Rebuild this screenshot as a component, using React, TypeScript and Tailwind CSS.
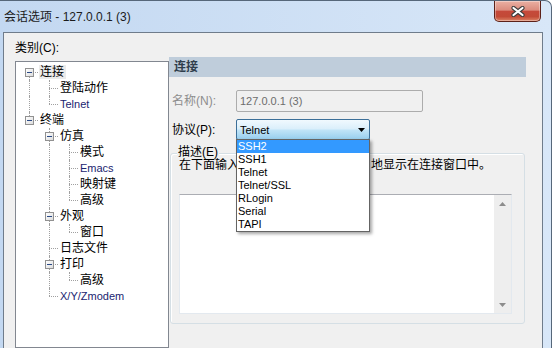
import React from 'react';

type Item = {
  t: string;
  lv: number;
  kids?: boolean;
  next: boolean;
  g: boolean[];
  latin?: boolean;
  sel?: boolean;
  first?: boolean;
};

const items: Item[] = [
  { t: '连接', lv: 0, kids: true, next: true, g: [], sel: true, first: true },
  { t: '登陆动作', lv: 1, next: true, g: [true] },
  { t: 'Telnet', lv: 1, next: false, g: [true], latin: true },
  { t: '终端', lv: 0, kids: true, next: false, g: [] },
  { t: '仿真', lv: 1, kids: true, next: true, g: [false] },
  { t: '模式', lv: 2, next: true, g: [false, true] },
  { t: 'Emacs', lv: 2, next: true, g: [false, true], latin: true },
  { t: '映射键', lv: 2, next: true, g: [false, true] },
  { t: '高级', lv: 2, next: false, g: [false, true] },
  { t: '外观', lv: 1, kids: true, next: true, g: [false] },
  { t: '窗口', lv: 2, next: false, g: [false, true] },
  { t: '日志文件', lv: 1, next: true, g: [false] },
  { t: '打印', lv: 1, kids: true, next: true, g: [false] },
  { t: '高级', lv: 2, next: false, g: [false, true] },
  { t: 'X/Y/Zmodem', lv: 1, next: false, g: [false], latin: true },
];

function TreeRow({ it }: { it: Item }) {
  return (
    <div className="flex h-[16px] items-center pl-[3px]">
      {it.g.map((v, i) => (
        <div key={i} className="relative h-full w-[20px] shrink-0">
          {v && <div className="absolute left-[10px] top-0 bottom-0 border-l border-dotted border-[#a0a0a0]" />}
        </div>
      ))}
      <div className="relative h-full w-[20px] shrink-0">
        {!it.first && <div className="absolute left-[10px] top-0 h-[8px] border-l border-dotted border-[#a0a0a0]" />}
        {it.next && <div className="absolute left-[10px] top-[8px] bottom-0 border-l border-dotted border-[#a0a0a0]" />}
        <div className="absolute left-[10px] right-[1px] top-[8px] border-t border-dotted border-[#a0a0a0]" />
        {it.kids && (
          <div className="absolute left-[6px] top-[4px] h-[9px] w-[9px] border border-[#919191] bg-gradient-to-br from-white to-[#dcdcdc]">
            <div className="absolute left-[1px] top-[3px] h-[1px] w-[5px] bg-[#2a4a86]" />
          </div>
        )}
      </div>
      <span
        className={
          (it.sel ? 'bg-[#ebebeb] ' : '') +
          (it.latin ? 'text-[11px] text-[#1a2470] ' : 'text-[12px] text-black ') +
          'h-[14px] pl-[1px] pr-[2px] leading-[14px] whitespace-nowrap'
        }
      >
        {it.t}
      </span>
    </div>
  );
}

function CloseButton() {
  return (
    <div className="mr-[10px] flex h-[21px] w-[47px] items-center justify-center rounded-b-[5px] border border-t-0 border-[#5c2119] bg-[linear-gradient(to_bottom,#eab0a3_0%,#db8c7e_45%,#c5493a_52%,#c24a36_78%,#dc8466_100%)] shadow-[inset_0_0_0_1px_rgba(255,255,255,0.35)]">
      <svg width="14" height="11" viewBox="0 0 14 11">
        <path d="M2.5 2 L11.5 9 M11.5 2 L2.5 9" stroke="#3d3d3d" strokeWidth="4.2" strokeLinecap="round" />
        <path d="M2.5 2 L11.5 9 M11.5 2 L2.5 9" stroke="#ffffff" strokeWidth="2.2" strokeLinecap="round" />
      </svg>
    </div>
  );
}

const protocols = ['SSH2', 'SSH1', 'Telnet', 'Telnet/SSL', 'RLogin', 'Serial', 'TAPI'];

export default function App() {
  return (
    <div className="h-[348px] w-[552px] overflow-hidden bg-white font-['Liberation_Sans','Noto_Sans_CJK_SC',sans-serif] text-[12px] leading-[16px] text-black">
      <div className="flex h-full w-full flex-col rounded-tr-[7px] border-t border-r border-[#56677a] bg-gradient-to-r from-[#c3d8f1] to-[#d8e7f8]">
        <div className="flex h-[31px] shrink-0 items-start justify-between">
          <div className="pl-[4px] pt-[8px] text-[12px] text-[#1b1b1b] whitespace-nowrap">会话选项 - 127.0.0.1 (3)</div>
          <CloseButton />
        </div>
        <div className="ml-[3px] mr-[8px] flex flex-1 border border-b-0 border-[#6f7c8b] bg-[#f0f0f0]">
          {/* left column */}
          <div className="flex w-[165px] shrink-0 flex-col pl-[11px] pt-[7px]">
            <div className="h-[16px] whitespace-nowrap">类别(C):</div>
            <div className="mt-[5px] flex-1 border border-[#828790] bg-white pt-[2px]">
              {items.map((it, i) => (
                <TreeRow key={i} it={it} />
              ))}
            </div>
          </div>
          {/* right column */}
          <div className="flex flex-1 flex-col pt-[24px]">
            <div className="flex h-[20px] w-[357px] items-center bg-[#bfcddb] pl-[5px] font-bold text-[#2f3d4c]">连接</div>

            <div className="mt-[13px] flex h-[22px] items-center">
              <div className="w-[67px] pl-[3px] text-[#8d8d8d] whitespace-nowrap">名称(N):</div>
              <div className="flex h-[22px] w-[187px] items-center rounded-[2px] border border-[#acacac] bg-[#f0f0f0] pl-[3px] text-[11px] text-[#6d6d6d]">
                127.0.0.1 (3)
              </div>
            </div>

            <div className="relative z-20 mt-[7px] flex h-[21px] items-center">
              <div className="w-[67px] pl-[3px] whitespace-nowrap">协议(P):</div>
              <div className="relative h-[21px] w-[134px]">
                <div className="flex h-full w-full items-center justify-between rounded-[2px] border border-[#3c6f98] bg-[linear-gradient(to_bottom,#f1f9fe_0%,#dbeffb_45%,#bfe3f7_55%,#98cfee_100%)] pl-[3px] pr-[4px] text-[11px]">
                  <span>Telnet</span>
                  <svg width="7" height="4" viewBox="0 0 7 4">
                    <path d="M0 0 H7 L3.5 4 Z" fill="#000" />
                  </svg>
                </div>
                <div className="absolute left-0 top-[20px] w-[134px] border border-[#646464] bg-white shadow-[2px_2px_3px_rgba(0,0,0,0.35)]">
                  {protocols.map((p, i) => (
                    <div
                      key={p}
                      className={
                        (i === 0 ? 'bg-[#3399ff] text-white ' : 'text-black ') +
                        'h-[13px] pl-[1px] text-[11px] leading-[13px] whitespace-nowrap'
                      }
                    >
                      {p}
                    </div>
                  ))}
                </div>
              </div>
            </div>

            <div className="relative ml-[1px] mt-[13px] h-[171px] w-[355px] rounded-[3px] border border-[#d5dfe5] pl-[8px] pt-[4px] shadow-[inset_1px_1px_0_#ffffff]">
              <div className="absolute left-[6px] top-[-8px] h-[12px] bg-[#f0f0f0] px-[1px] text-[12px] leading-[12px] whitespace-nowrap">描述(E)</div>
              <div className="flex h-[14px] text-[12px] leading-[14px] whitespace-nowrap">
                <span>在下面输入</span>
                <span className="w-[132px] shrink-0" />
                <span>地显示在连接窗口中。</span>
              </div>
              <div className="mt-[22px] flex h-[120px] w-[333px] justify-end border border-[#e3e9ef] border-t-[#abadb3] bg-white">
                <div className="flex h-full w-[17px] flex-col justify-between bg-[#eeeeee]">
                  <div className="flex h-[17px] items-center justify-center">
                    <svg width="7" height="4" viewBox="0 0 7 4">
                      <path d="M0 4 H7 L3.5 0 Z" fill="#8c8c8c" />
                    </svg>
                  </div>
                  <div className="flex h-[17px] items-center justify-center">
                    <svg width="7" height="4" viewBox="0 0 7 4">
                      <path d="M0 0 H7 L3.5 4 Z" fill="#8c8c8c" />
                    </svg>
                  </div>
                </div>
              </div>
            </div>
          </div>
        </div>
      </div>
    </div>
  );
}
